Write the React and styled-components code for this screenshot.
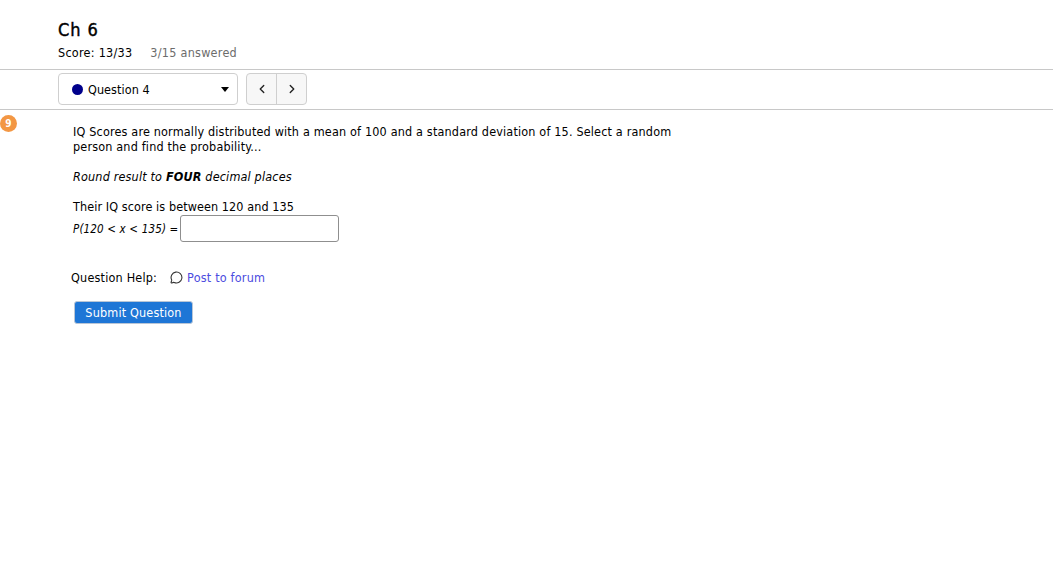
import React from 'react';
import styled, { createGlobalStyle } from 'styled-components';
import { MessageCircle, ChevronLeft, ChevronRight } from 'lucide-react';

const Global = createGlobalStyle`
  html, body { margin: 0; padding: 0; background: #fff; }
  body { font-family: "DejaVu Sans", "Noto Sans", sans-serif; font-stretch: condensed; font-size: 12.5px; letter-spacing: 0.17px; color: #000; overflow: hidden; }
`;

const Page = styled.div`
  width: 1053px;
  height: 561px;
  padding-top: 19px;
  box-sizing: border-box;
  position: relative;
`;

const Header = styled.header`
  padding-left: 58px;
`;

const Title = styled.h1`
  margin: 0;
  font-size: 18px;
  line-height: 22px;
  font-weight: 400;
  letter-spacing: 0.9px;
  -webkit-text-stroke: 0.4px #000;
`;

const ScoreLine = styled.div`
  display: flex;
  gap: 18px;
  margin-top: 4px;
  line-height: 16px;
  height: 16px;
  letter-spacing: 0.26px;
`;

const Answered = styled.span`
  color: #6c6c6c;
`;

const NavBar = styled.nav`
  margin: 8px 0 0 0;
  padding: 3px 0 4px 58px;
  display: flex;
  gap: 8px;
  border-top: 1px solid #c8c8c8;
  border-bottom: 1px solid #c8c8c8;
`;

const Select = styled.div`
  width: 180px;
  height: 32px;
  box-sizing: border-box;
  border: 1px solid #cfcfcf;
  border-radius: 4px;
  display: flex;
  align-items: center;
  padding: 0 8px 0 13px;
  letter-spacing: 0.07px;
`;

const Dot = styled.span`
  width: 11px;
  height: 11px;
  border-radius: 50%;
  background: #00008b;
  margin-right: 5px;
`;

const Caret = styled.span`
  margin-left: auto;
  border-left: 4px solid transparent;
  border-right: 4px solid transparent;
  border-top: 5px solid #000;
`;

const Pager = styled.div`
  display: flex;
  height: 32px;
  border: 1px solid #cfcfcf;
  border-radius: 4px;
  box-sizing: border-box;
  background: #f7f7f7;
`;

const PageButton = styled.div`
  width: 29px;
  display: flex;
  align-items: center;
  justify-content: center;
  & + & { border-left: 1px solid #cfcfcf; }
`;

const Badge = styled.div`
  position: absolute;
  left: 0;
  top: 115px;
  width: 17px;
  height: 17px;
  border-radius: 50%;
  background: #f39744;
  color: #fff;
  font-size: 10px;
  font-weight: 700;
  display: flex;
  align-items: center;
  justify-content: center;
`;

const Question = styled.section`
  padding: 14px 0 0 73px;
  width: 610px;
`;

const Para = styled.p`
  margin: 0 0 ${props => (props.$tight ? 0 : 15)}px;
  line-height: 15px;
  letter-spacing: ${props => (props.$tight ? 0.09 : 0.17)}px;
`;

const Answer = styled.div`
  display: flex;
  align-items: center;
  height: 27px;
  margin-top: 1px;
  font-style: italic;
  font-size: 11.5px;
  gap: 2px;
`;

const Field = styled.div`
  width: 159px;
  height: 27px;
  box-sizing: border-box;
  border: 1px solid #8f8f8f;
  border-radius: 3px;
`;

const Help = styled.div`
  display: flex;
  align-items: center;
  margin: 27px 0 0 -2px;
  height: 16px;
  letter-spacing: 0.2px;
`;

const ForumLink = styled.a`
  color: #4c4ce0;
  margin-left: 13px;
  display: flex;
  align-items: center;
  gap: 4px;
`;

const Submit = styled.button`
  display: block;
  margin: 16px 0 0 1px;
  width: 119px;
  height: 23px;
  padding: 0;
  border: 1px solid #b9c6d6;
  border-radius: 3px;
  background: #1e76d6;
  color: #fff;
  font: inherit;
  letter-spacing: inherit;
`;

export default function App() {
  return (
    <Page>
      <Global />
      <Header>
        <Title>Ch 6</Title>
        <ScoreLine>
          <span>Score: 13/33</span>
          <Answered>3/15 answered</Answered>
        </ScoreLine>
      </Header>
      <NavBar>
        <Select>
          <Dot />
          Question 4
          <Caret />
        </Select>
        <Pager>
          <PageButton><ChevronLeft size={14} strokeWidth={2.3} color="#222" /></PageButton>
          <PageButton><ChevronRight size={14} strokeWidth={2.3} color="#222" /></PageButton>
        </Pager>
      </NavBar>
      <Badge>9</Badge>
      <Question>
        <Para>IQ Scores are normally distributed with a mean of 100 and a standard deviation of 15. Select a random person and find the probability...</Para>
        <Para><i>Round result to <b>FOUR</b> decimal places</i></Para>
        <Para $tight>Their IQ score is between 120 and 135</Para>
        <Answer>P(120 &lt; x &lt; 135) = <Field /></Answer>
        <Help>
          Question Help:
          <ForumLink><MessageCircle size={13} color="#333" />Post to forum</ForumLink>
        </Help>
        <Submit>Submit Question</Submit>
      </Question>
    </Page>
  );
}
